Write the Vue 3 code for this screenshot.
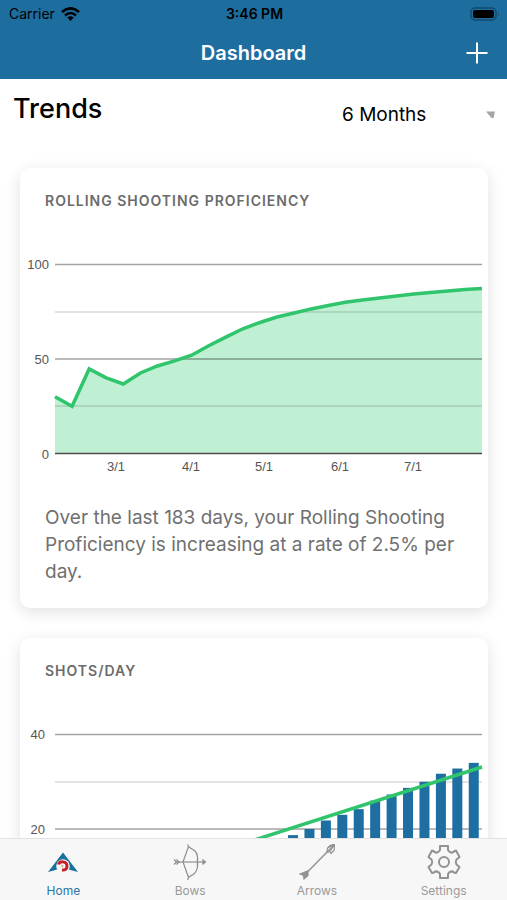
<template>
  <div class="app">
    <header class="header">
      <div class="status">
        <div class="carrier">
          <span>Carrier</span>
          <svg width="19" height="14" viewBox="0 0 19 14">
            <g fill="none" stroke="#000" stroke-width="2.6">
              <path d="M1 5 Q9.500 -2.400 18 5" />
              <path d="M4 8.400 Q9.500 3.600 15 8.400" />
            </g>
            <path d="M6.300 10.600 Q9.500 8 12.700 10.600 L9.500 14 Z" />
          </svg>
        </div>
        <span class="time">3:46 PM</span>
        <svg class="battery" width="30" height="14" viewBox="0 0 30 14">
          <rect x="1" y="1" width="25" height="12" rx="4" fill="none" stroke="#134a6e" stroke-width="1.500" />
          <rect x="3" y="3" width="21" height="8" rx="2" />
          <path d="M28 5 Q30 7 28 9 Z" fill="#134a6e" />
        </svg>
      </div>
      <div class="navbar">
        <h1>Dashboard</h1>
        <button class="add" type="button" aria-label="Add">
          <svg width="22" height="22" viewBox="0 0 22 22">
            <path d="M11 0.500 V21.500 M0.500 11 H21.500" stroke="#fff" stroke-width="2" />
          </svg>
        </button>
      </div>
    </header>

    <main class="content">
      <div class="trends">
        <h2>Trends</h2>
        <div class="period">
          <select v-model="period" aria-label="Period">
            <option>1 Month</option>
            <option>3 Months</option>
            <option>6 Months</option>
            <option>1 Year</option>
          </select>
          <svg class="caret" width="9" height="7" viewBox="0 0 9 7">
            <path d="M0 0.500 H9 L7.500 7 H5.500 Z" fill="#a5a5a5" />
          </svg>
        </div>
      </div>

      <section class="card">
        <h3>Rolling Shooting Proficiency</h3>
        <svg class="chart" viewBox="0 0 468 270">
          <polygon :points="area" fill="#c0f0d4" />
          <line v-for="g in grid" :key="g.y" x1="35" x2="462" :y1="g.y" :y2="g.y" :class="g.kind" />
          <polyline :points="line" class="trend" />
          <text v-for="(l, i) in [100, 50, 0]" :key="l" x="29" :y="59 + i * 95" class="label end">{{ l }}</text>
          <text v-for="m in months" :key="m.name" :x="m.x" y="261" class="label middle">{{ m.name }}</text>
        </svg>
        <p>Over the last 183 days, your Rolling Shooting Proficiency is increasing at a rate of 2.5% per day.</p>
      </section>

      <section class="card">
        <h3>Shots/Day</h3>
        <svg class="chart" viewBox="0 0 468 270">
          <line v-for="g in grid" :key="g.y" x1="35" x2="462" :y1="g.y" :y2="g.y" :class="g.kind" />
          <rect v-for="(b, i) in bars" :key="i" :x="b.x" :y="b.y" width="10" :height="b.height" fill="#1d6ea1" />
          <line x1="35" y1="224" x2="462" y2="87" class="trend" />
          <text v-for="(l, i) in [40, 20]" :key="l" x="25" :y="59 + i * 95" class="label end">{{ l }}</text>
        </svg>
      </section>
    </main>

    <nav class="tabs">
      <a href="#home" class="active">
        <svg width="36" height="36" viewBox="0 0 36 36">
          <path d="M18 8.500 L33 28 L18 24 L3 28 Z" fill="#17719b" />
          <circle cx="18" cy="22" r="6.800" fill="#f8f6f4" />
          <path d="M13.500 20.500 C14.500 16.500 22 17 22 22 C22 25 20 26.500 17 26" fill="none" stroke="#c91f2b" stroke-width="3" />
          <path d="M16 20.500 L19 21.500 L17 24 Z" fill="#e7a48f" />
        </svg>
        <span>Home</span>
      </a>
      <a href="#bows">
        <svg width="36" height="36" viewBox="0 0 36 36" fill="none" stroke="#8e8e8e" stroke-width="1.200">
          <path d="M15.500 0.500 L17 3 L23 7 Q25.500 10 25.500 13 V23 Q25 27 22 30 L17 33 L15.500 36 M16.500 2.500 L11 18 L16.500 33.500" />
          <path d="M3 18 H32" />
          <path d="M2 15.500 L4.500 18 L2 20.500 M4.500 15.500 L7 18 L4.500 20.500 M25.500 14 V22" />
          <path d="M31 16 L33.500 18 L31 20 Z" fill="#8e8e8e" />
        </svg>
        <span>Bows</span>
      </a>
      <a href="#arrows">
        <svg width="36" height="36" viewBox="0 0 36 36" fill="none" stroke="#929292" stroke-width="1.200">
          <path d="M5 31.500 L34 2" stroke-width="1.500" />
          <path d="M36 0 L35 6.500 L32 9.500 L31 7.500 L28 8.500 L28.500 4 L31 1.500 Z M31 7.500 L36 0 L28.500 4" />
          <path d="M8.500 27 L1 30 L4.500 31.500 L5 35 L8.500 32 Z M9 27 V32" fill="#929292" />
        </svg>
        <span>Arrows</span>
      </a>
      <a href="#settings">
        <svg width="36" height="36" viewBox="0 0 36 36" fill="none" stroke="#929292" stroke-width="2" stroke-linejoin="round">
          <path d="M14 2 H22 V6 Q22.500 7.500 25 8.500 Q26.500 9 28 7.500 L30 6.500 L33.500 13 L30.500 15.500 Q29 18 30.500 20.500 L33.500 23 L30 29 L28 28.500 Q26.500 27 25 27.500 Q22.500 28.500 22 30 V34 H14 V30 Q13.500 28.500 11 27.500 Q9.500 27 8 28.500 L6 29 L2.500 23 L5.500 20.500 Q7 18 5.500 15.500 L2.500 13 L6 6.500 L8 7.500 Q9.500 9 11 8.500 Q13.500 7.500 14 6 Z" />
          <circle cx="18" cy="18" r="5" />
        </svg>
        <span>Settings</span>
      </a>
    </nav>
  </div>
</template>

<script setup>
import { ref, computed } from "vue";

const period = ref("6 Months");

const proficiency = [
  30, 25, 44.7, 40, 36.8, 42.6, 46.3, 49, 52, 57, 61.6, 66, 69.3, 72.2, 74.3,
  76.5, 78.3, 80, 81.2, 82.3, 83.3, 84.4, 85.2, 86, 86.8, 87.3,
];
const shots = [
  3, 4, 5, 6, 7, 8, 9, 10, 11, 12, 13.5, 15, 16, 17.5, 18.7, 20, 21.8, 23,
  24.2, 26, 27.3, 28.7, 30, 31.7, 32.8, 34,
];

const months = [
  { name: "3/1", x: 96 },
  { name: "4/1", x: 171 },
  { name: "5/1", x: 244 },
  { name: "6/1", x: 320 },
  { name: "7/1", x: 393 },
];

const grid = [
  { y: 54.5, kind: "major" },
  { y: 102, kind: "minor" },
  { y: 149, kind: "major" },
  { y: 196, kind: "minor" },
  { y: 243.5, kind: "axis" },
];

// plot area: x 35..462, y 54.5..243.5
const line = computed(() =>
  proficiency
    .map((v, i) => `${35 + (i * 427) / (proficiency.length - 1)},${243.5 - v * 1.89}`)
    .join(" ")
);
const area = computed(() => `35,243.5 ${line.value} 462,243.5`);

const bars = computed(() =>
  shots.map((v, i) => {
    const height = (v * 189) / 40;
    return { x: 38 + i * 16.43, y: 243.5 - height, height };
  })
);
</script>

<style>
body {
  margin: 0;
  background: #fff;
}
</style>

<style scoped>
.app {
  height: 100vh;
  display: flex;
  flex-direction: column;
  font-family: Inter, "Liberation Sans", sans-serif;
  color: #000;
}
h1,
h2,
h3,
p {
  margin: 0;
}
.header {
  background: #1d6d9f;
}
.status {
  display: grid;
  grid-template-columns: 1fr auto 1fr;
  align-items: center;
  height: 27px;
  padding: 0 7px 0 9px;
  font-size: 14px;
}
.carrier {
  display: flex;
  align-items: center;
  gap: 6px;
}
.time {
  font-weight: 600;
}
.battery {
  justify-self: end;
}
.navbar {
  display: grid;
  grid-template-columns: 1fr auto 1fr;
  align-items: center;
  height: 52px;
  padding: 0 19px;
}
.navbar h1 {
  grid-column: 2;
  color: #fff;
  font-size: 20px;
  font-weight: 600;
}
.add {
  justify-self: end;
  display: flex;
  padding: 0;
  border: 0;
  background: none;
}
.content {
  flex: 1;
  min-height: 0;
  overflow-y: auto;
  scrollbar-width: none;
}
.trends {
  display: flex;
  justify-content: space-between;
  align-items: flex-start;
  height: 89px;
  padding: 0 12px 0 13px;
  box-sizing: border-box;
}
.trends h2 {
  font-size: 27px;
  line-height: 60px;
  font-weight: 500;
}
.period {
  position: relative;
  width: 153px;
}
.period select {
  width: 100%;
  height: 70px;
  padding: 0;
  border: 0;
  appearance: none;
  background: none;
  color: #000;
  font-family: inherit;
  font-size: 19px;
}
.caret {
  position: absolute;
  right: 0;
  top: 32px;
  pointer-events: none;
}
.card {
  margin: 0 19px 30px 20px;
  padding: 24px 0 23px;
  border-radius: 10px;
  background: #fff;
  box-shadow: 0 4px 16px rgba(0, 0, 0, 0.12);
}
.card h3 {
  padding: 0 25px;
  font-size: 14px;
  line-height: 18px;
  font-weight: 600;
  letter-spacing: 1px;
  text-transform: uppercase;
  color: #6b6b6b;
}
.card p {
  padding: 24px 25px 0;
  font-size: 19px;
  line-height: 27px;
  color: #707070;
}
.chart {
  display: block;
  width: 100%;
}
.major {
  stroke: #000;
  stroke-opacity: 0.36;
  stroke-width: 1.5;
}
.minor {
  stroke: #000;
  stroke-opacity: 0.15;
  stroke-width: 1.5;
}
.axis {
  stroke: #4c4c4c;
  stroke-width: 1.5;
}
.trend {
  fill: none;
  stroke: #30c56d;
  stroke-width: 3.5;
}
.label {
  font-family: "Liberation Sans", sans-serif;
  font-size: 13px;
  fill: #555;
}
.end {
  text-anchor: end;
}
.middle {
  text-anchor: middle;
}
.tabs {
  position: relative;
  display: grid;
  grid-template-columns: repeat(4, 1fr);
  height: 62px;
  box-sizing: border-box;
  border-top: 1px solid #e2e2e2;
  background: #f7f7f7;
}
.tabs a {
  display: flex;
  flex-direction: column;
  align-items: center;
  gap: 2px;
  padding-top: 5px;
  color: #999;
  font-size: 12px;
  line-height: 18px;
  text-decoration: none;
}
.tabs .active {
  color: #2b75a5;
}
</style>
